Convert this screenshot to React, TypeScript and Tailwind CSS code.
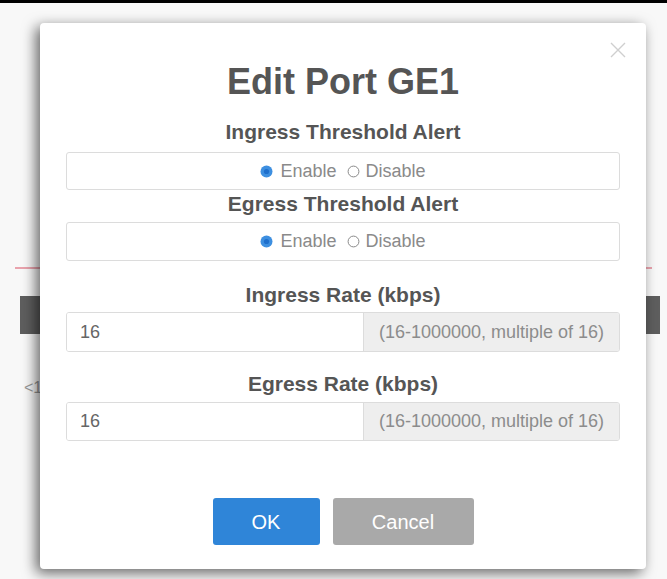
import React from 'react';

const font = { fontFamily: '"Liberation Sans", Arial, sans-serif' };

const Radio = ({ checked }: { checked: boolean }) =>
  checked ? (
    <svg width="13" height="13" viewBox="0 0 13 13">
      <circle cx="6.5" cy="6.5" r="6" fill="#3d8fe0" />
      <circle cx="6.5" cy="6.5" r="2.6" fill="#1e6fcc" />
    </svg>
  ) : (
    <svg width="13" height="13" viewBox="0 0 13 13">
      <circle cx="6.5" cy="6.5" r="5.4" fill="#fff" stroke="#8a8a8a" strokeWidth="1" />
    </svg>
  );

const AlertChoice = () => (
  <div className="flex items-center justify-center border border-[#dcdcdc] rounded-[3px] text-[18px] text-[#8a8a8a]">
    <Radio checked />
    <span className="ml-[7px]">Enable</span>
    <span className="ml-[10px] flex items-center">
      <Radio checked={false} />
    </span>
    <span className="ml-[6px]">Disable</span>
  </div>
);

const RateInput = ({ value }: { value: string }) => (
  <div className="flex border border-[#dcdcdc] rounded-[3px] overflow-hidden text-[18px]">
    <div className="w-[296px] flex items-center pl-[13px] text-[#666] bg-white">{value}</div>
    <div className="flex-1 flex items-center justify-center bg-[#eeeeee] border-l border-[#dcdcdc] text-[#8c8c8c]">
      (16-1000000, multiple of 16)
    </div>
  </div>
);

export default function App() {
  return (
    <div className="relative w-[667px] h-[579px] overflow-hidden bg-[#f8f8f8]" style={font}>
      {/* page behind the dialog */}
      <div className="h-[3px] bg-black" />
      <div className="mt-[264px] mx-[15px] h-[2px] bg-[#e9a3ad]" />
      <div className="mt-[27px] ml-[20px] mr-[7px] h-[38px] bg-[#5e5e5e]" />
      <div className="mt-[42px] ml-[24px] text-[16px] text-[#999]">&lt;1</div>

      {/* dialog */}
      <div className="absolute left-[40px] top-[23px] w-[606px] h-[546px] bg-white rounded-[4px] shadow-[-4px_4px_14px_rgba(0,0,0,0.6)] px-[26px] pt-[39px]">
        <svg className="absolute top-[19px] right-[20px]" width="16" height="16" viewBox="0 0 16 16">
          <path d="M1 1 L15 15 M15 1 L1 15" stroke="#cfcfcf" strokeWidth="1.4" />
        </svg>

        <h4 className="text-center text-[36px] leading-[40px] font-bold text-[#555]">Edit Port GE1</h4>

        <div className="mt-[18px] text-center text-[21px] leading-[24px] font-bold text-[#555]">Ingress Threshold Alert</div>
        <div className="mt-[8px] h-[38px] grid">
          <AlertChoice />
        </div>

        <div className="mt-[2px] text-center text-[21px] leading-[24px] font-bold text-[#555]">Egress Threshold Alert</div>
        <div className="mt-[6px] h-[39px] grid">
          <AlertChoice />
        </div>

        <div className="mt-[22px] text-center text-[21px] leading-[24px] font-bold text-[#555]">Ingress Rate (kbps)</div>
        <div className="mt-[5px] h-[40px] grid">
          <RateInput value="16" />
        </div>

        <div className="mt-[20px] text-center text-[21px] leading-[24px] font-bold text-[#555]">Egress Rate (kbps)</div>
        <div className="mt-[6px] h-[39px] grid">
          <RateInput value="16" />
        </div>

        <div className="mt-[57px] flex justify-center gap-[13px]">
          <button className="w-[107px] h-[47px] rounded-[3px] bg-[#2f85d8] text-white text-[20px]">OK</button>
          <button className="w-[141px] h-[47px] rounded-[3px] bg-[#a9a9a9] text-white text-[20px]">Cancel</button>
        </div>
      </div>
    </div>
  );
}
